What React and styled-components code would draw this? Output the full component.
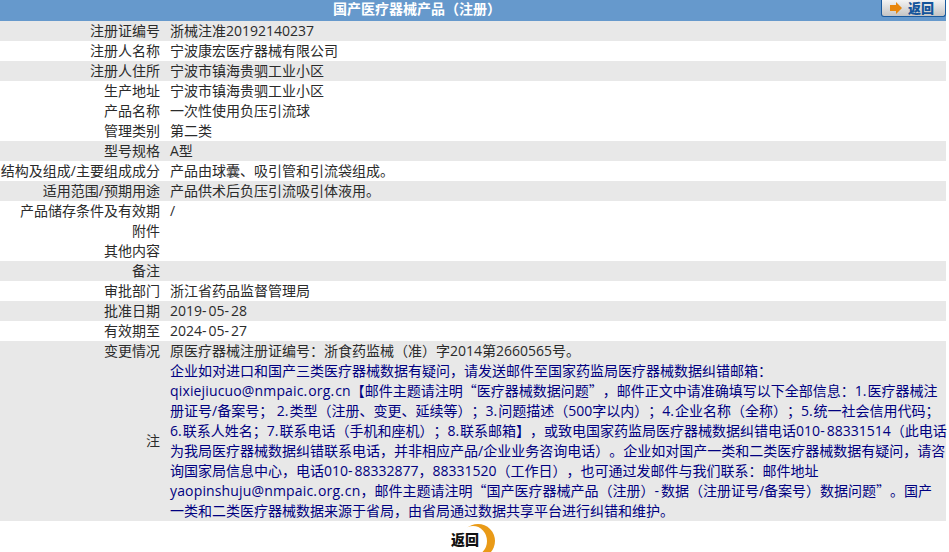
import styled, { createGlobalStyle } from 'styled-components';

const GlobalStyle = createGlobalStyle`
  html, body {
    margin: 0;
    padding: 0;
    background: #fff;
    overflow: hidden;
  }
`;

const Page = styled.div`
  width: 946px;
  font-family: 'Open Sans', 'Noto Sans CJK SC', sans-serif;
  font-size: 14px;
  line-height: 20px;
  color: #2b2b2b;
  text-spacing-trim: space-all;
`;

const TitleBar = styled.div`
  position: relative;
  height: 21px;
  padding-right: 112px;
  line-height: 17px;
  background: #6699cc;
  color: #fff;
  font-weight: 700;
  text-align: center;
`;

const TopBack = styled.button`
  position: absolute;
  top: 0;
  right: 0;
  width: 65px;
  height: 17px;
  padding: 0 0 0 8px;
  display: flex;
  align-items: center;
  gap: 6px;
  background: linear-gradient(#f4f4f4, #c4c4c4);
  border: 1px solid #1a5a9e;
  border-top: 0;
  border-radius: 0 0 3px 3px;
  color: #14559b;
  font-family: inherit;
  font-size: 13px;
  line-height: 15px;
  font-weight: 900;
`;

const Row = styled.div`
  display: grid;
  grid-template-columns: 160px 1fr;
  column-gap: 10px;
  background: ${p => (p.$shaded ? '#e8e8e8' : '#fff')};
`;

const Label = styled.div`
  text-align: right;
  white-space: nowrap;
  direction: rtl;
  align-self: ${p => (p.$middle ? 'center' : 'start')};
`;

const Value = styled.div`
  white-space: nowrap;
  color: ${p => (p.$notice ? '#000080' : 'inherit')};
`;

const Line = styled.div`
  height: 20px;
`;

const Quote = styled.span`
  font-family: 'Noto Sans CJK SC', sans-serif;
  line-height: 1;
`;

const Latin = styled.span`
  letter-spacing: 0.15px;
`;

const Punct = styled.span`
  letter-spacing: ${p => p.$gap}px;
`;

const Footer = styled.div`
  height: 31px;
  display: flex;
  justify-content: center;
`;

const BottomBack = styled.button`
  position: relative;
  width: 46px;
  height: 31px;
  padding: 0;
  border: 0;
  background: none;
  font-family: inherit;
  font-size: 14px;
  font-weight: 900;
  color: #111;
`;

const BottomLabel = styled.span`
  position: absolute;
  left: 1px;
  top: 9px;
  line-height: 20px;
`;

const rows = [
  ['注册证编号', '浙械注准20192140237', true],
  ['注册人名称', '宁波康宏医疗器械有限公司', false],
  ['注册人住所', '宁波市镇海贵驷工业小区', true],
  ['生产地址', '宁波市镇海贵驷工业小区', false],
  ['产品名称', '一次性使用负压引流球', false],
  ['管理类别', '第二类', false],
  ['型号规格', 'A型', true],
  ['结构及组成/主要组成成分', '产品由球囊、吸引管和引流袋组成。', false],
  ['适用范围/预期用途', '产品供术后负压引流吸引体液用。', true],
  ['产品储存条件及有效期', '/', false],
  ['附件', '', false],
  ['其他内容', '', false],
  ['备注', '', true],
  ['审批部门', '浙江省药品监督管理局', false],
  ['批准日期', '2019-05-28', true],
  ['有效期至', '2024-05-27', false],
  ['变更情况', '原医疗器械注册证编号：浙食药监械（准）字2014第2660565号。', true],
];

const notice = [
  '企业如对进口和国产三类医疗器械数据有疑问，请发送邮件至国家药监局医疗器械数据纠错邮箱：',
  'qixiejiucuo@nmpaic.org.cn【邮件主题请注明“医疗器械数据问题”，邮件正文中请准确填写以下全部信息：1.医疗器械注',
  '册证号/备案号； 2.类型（注册、变更、延续等）；3.问题描述（500字以内）；4.企业名称（全称）；5.统一社会信用代码；',
  '6.联系人姓名；7.联系电话（手机和座机）；8.联系邮箱】，或致电国家药监局医疗器械数据纠错电话010-88331514（此电话',
  '为我局医疗器械数据纠错联系电话，并非相应产品/企业业务咨询电话）。企业如对国产一类和二类医疗器械数据有疑问，请咨',
  '询国家局信息中心，电话010-88332877，88331520（工作日），也可通过发邮件与我们联系：邮件地址',
  'yaopinshuju@nmpaic.org.cn，邮件主题请注明“国产医疗器械产品（注册）-数据（注册证号/备案号）数据问题”。国产',
  '一类和二类医疗器械数据来源于省局，由省局通过数据共享平台进行纠错和维护。',
];

// the reference font has wider dots, hyphens and letters than Open Sans,
// and the curly quotes have to come from the CJK font
const spaced = text =>
  text.split(/([“”]|[a-z@]+|[.-])/).map((part, idx) => {
    if (idx % 2 === 0) return part;
    if (part === '“' || part === '”') return <Quote key={idx}>{part}</Quote>;
    if (part === '.') return <Punct key={idx} $gap={1}>{part}</Punct>;
    if (part === '-') return <Punct key={idx} $gap={2}>{part}</Punct>;
    return <Latin key={idx}>{part}</Latin>;
  });

const Arrow = () => (
  <svg width="12" height="12" viewBox="0 0 12 12">
    <path d="M0 3h6V0l6 6-6 6V9H0z" fill="#e8860c" />
  </svg>
);

const Crescent = () => (
  <svg width="46" height="31" viewBox="0 0 46 31">
    <circle cx="28" cy="20" r="17" fill="#e99a17" />
    <ellipse cx="23" cy="20" rx="14" ry="15" fill="#fff" />
  </svg>
);

export default function App() {
  return (
    <Page>
      <GlobalStyle />
      <TitleBar>
        国产医疗器械产品（注册）
        <TopBack>
          <Arrow />
          返回
        </TopBack>
      </TitleBar>
      {rows.map(([label, value, shaded]) => (
        <Row key={label} $shaded={shaded}>
          <Label>{label}</Label>
          <Value>{spaced(value)}</Value>
        </Row>
      ))}
      <Row $shaded>
        <Label $middle>注</Label>
        <Value $notice>
          {notice.map(line => (
            <Line key={line}>{spaced(line)}</Line>
          ))}
        </Value>
      </Row>
      <Footer>
        <BottomBack>
          <Crescent />
          <BottomLabel>返回</BottomLabel>
        </BottomBack>
      </Footer>
    </Page>
  );
}
